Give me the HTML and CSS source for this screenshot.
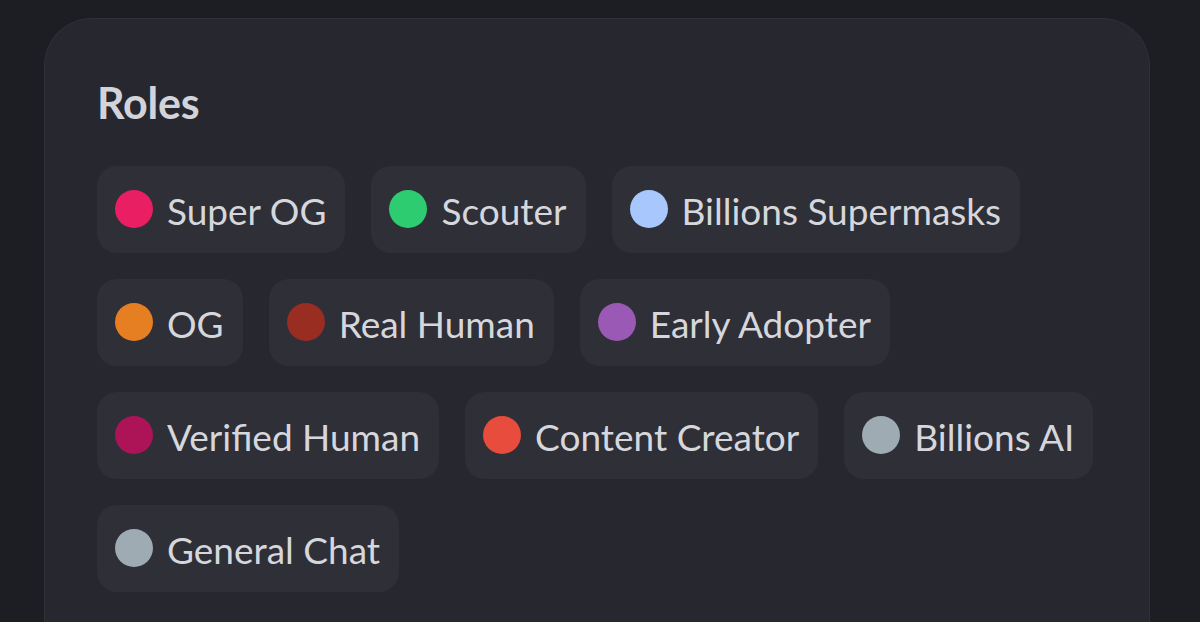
FILE: index.html
```html
<!DOCTYPE html>
<html lang="en">
<head>
<meta charset="utf-8">
<title>Roles</title>
<link rel="stylesheet" href="styles.css">
</head>
<body>
<div class="page">
  <section class="card">
    <h2 class="title">Roles</h2>
    <ul class="roles">
      <li class="role"><span class="dot c-superog"></span><span class="name">Super OG</span></li>
      <li class="role"><span class="dot c-scouter"></span><span class="name">Scouter</span></li>
      <li class="role"><span class="dot c-supermasks"></span><span class="name">Billions Supermasks</span></li>
      <li class="role"><span class="dot c-og"></span><span class="name">OG</span></li>
      <li class="role"><span class="dot c-real"></span><span class="name">Real Human</span></li>
      <li class="role"><span class="dot c-early"></span><span class="name">Early Adopter</span></li>
      <li class="role"><span class="dot c-verified"></span><span class="name">Verified Human</span></li>
      <li class="role"><span class="dot c-creator"></span><span class="name">Content Creator</span></li>
      <li class="role"><span class="dot c-ai"></span><span class="name">Billions AI</span></li>
      <li class="role"><span class="dot c-chat"></span><span class="name">General Chat</span></li>
    </ul>
  </section>
</div>
</body>
</html>
```

FILE: styles.css
```css
html, body {
  margin: 0;
  padding: 0;
  background: #1d1e23;
  height: 100%;
  overflow: hidden;
}

.page {
  padding: 18px 50px 0 44px;
  font-family: Lato, "Noto Sans", sans-serif;
}

.card {
  box-sizing: border-box;
  width: 1106px;
  height: 640px;
  background: #27282f;
  border: 1px solid #2f3038;
  border-bottom: none;
  border-radius: 48px 48px 0 0;
  padding: 58px 20px 0 52px;
}

.title {
  margin: 0;
  font-size: 43px;
  line-height: 1.2;
  font-weight: 700;
  color: #d3d4da;
  letter-spacing: -0.2px;
}

.roles {
  list-style: none;
  margin: 37px 0 0 0;
  padding: 0;
  display: flex;
  flex-wrap: wrap;
  column-gap: 26px;
  row-gap: 26px;
}

.role {
  box-sizing: border-box;
  height: 87px;
  display: flex;
  align-items: center;
  gap: 14px;
  padding: 0 19px 0 18px;
  background: #2e2f37;
  border-radius: 20px;
}

.dot {
  width: 38px;
  height: 38px;
  border-radius: 50%;
  flex: none;
}

.name {
  font-size: 37px;
  line-height: 1;
  padding-top: 3px;
  color: #d6d7dc;
  white-space: nowrap;
}

.c-superog { background: #e91e63; }
.c-scouter { background: #2ecc71; }
.c-supermasks { background: #a8c7fc; }
.c-og { background: #e67e22; }
.c-real { background: #992d22; }
.c-early { background: #9b59b6; }
.c-verified { background: #ad1457; }
.c-creator { background: #e74c3c; }
.c-ai { background: #9eabb2; }
.c-chat { background: #9eabb2; }
```
